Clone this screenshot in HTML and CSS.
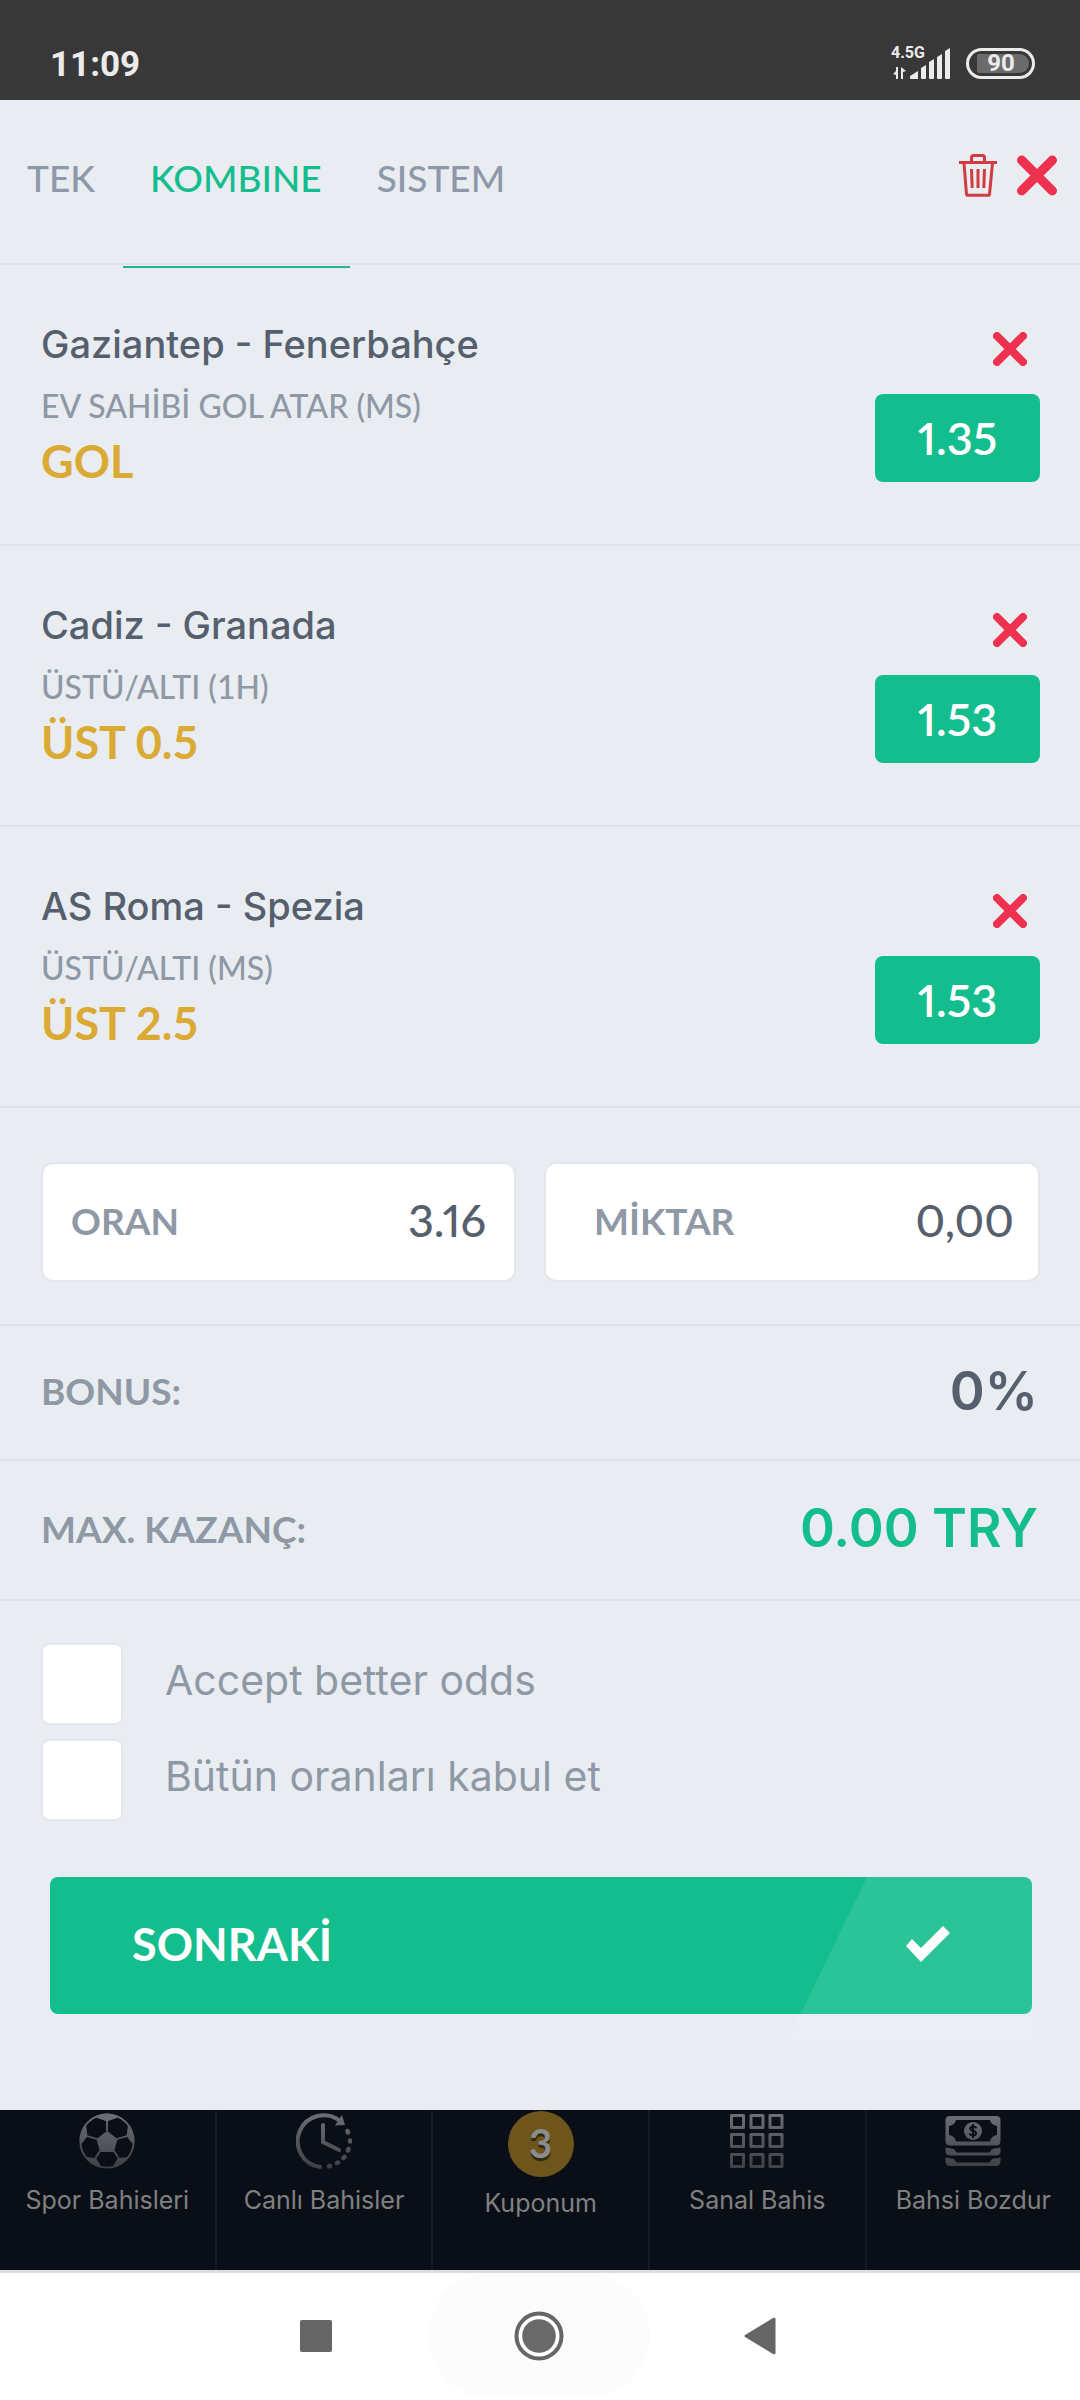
FILE: index.html
```html
<!DOCTYPE html>
<html lang="tr">
<head>
<meta charset="utf-8">
<meta name="viewport" content="width=device-width, initial-scale=1">
<title>Kuponum</title>
<link rel="stylesheet" href="styles.css">
</head>
<body>
<svg class="defs" aria-hidden="true">
  <defs>
    <linearGradient id="fade" gradientUnits="userSpaceOnUse" x1="0" y1="0" x2="0" y2="56">
      <stop offset="0" stop-color="#6e7075"/>
      <stop offset="1" stop-color="#3c3f46"/>
    </linearGradient>
    <symbol id="cross" viewBox="0 0 34 34">
      <path d="M4 4 30 30M30 4 4 30" fill="none" stroke="#ef3150" stroke-width="8" stroke-linecap="round"/>
    </symbol>
  </defs>
</svg>

<div class="status">
  <time class="clock">11:09</time>
  <div class="indicators">
    <div class="network">
      <span class="network-type">4.5G</span>
      <svg width="60" height="32" viewBox="0 0 60 32" fill="#ebebeb" aria-hidden="true">
        <path d="M7 19v12H5V27L2 26 5 23V19zM10 31V19l5 4-3 1v7z"/>
        <path d="M19 28l8-5v8h-7q-1 0-1-1zM30 20l5-3v13q0 1-1 1h-3q-1 0-1-1zM38 14l5-3v19q0 1-1 1h-3q-1 0-1-1zM46 9l5-3v24q0 1-1 1h-3q-1 0-1-1zM54 3l5-3v30q0 1-1 1h-3q-1 0-1-1z"/>
      </svg>
    </div>
    <div class="battery"><span class="battery-level">90</span></div>
  </div>
</div>

<main class="slip">
  <header class="slip-head">
    <nav class="tabs">
      <button class="tab" type="button">TEK</button>
      <button class="tab tab-active" type="button">KOMBINE</button>
      <button class="tab" type="button">SISTEM</button>
    </nav>
    <div class="actions">
      <button class="icon-button" type="button" aria-label="Kuponu temizle">
        <svg width="38" height="43" viewBox="0 0 38 43" fill="none" stroke="#d23c41" stroke-width="3" aria-hidden="true">
          <path d="M0 8.500H38M12.500 8V3.500Q12.500 1.500 14.500 1.500H23.500Q25.500 1.500 25.500 3.500V8M5 9 7.500 40.500Q7.600 41.200 8.500 41.200H29.500Q30.400 41.200 30.500 40.500L33.500 9M12.500 15l.7 19M19 15v19M25.500 15l-.7 19"/>
        </svg>
      </button>
      <button class="icon-button" type="button" aria-label="Kapat">
        <svg width="40" height="41" aria-hidden="true"><use href="#cross"/></svg>
      </button>
    </div>
  </header>

  <section class="bet">
    <div class="bet-info">
      <h2 class="bet-title">Gaziantep - Fenerbahçe</h2>
      <p class="bet-market">EV SAHİBİ GOL ATAR (MS)</p>
      <p class="bet-pick">GOL</p>
    </div>
    <div class="bet-side">
      <button class="icon-button bet-remove" type="button" aria-label="Sil"><svg width="34" height="34" aria-hidden="true"><use href="#cross"/></svg></button>
      <span class="odds">1.35</span>
    </div>
  </section>
  <section class="bet">
    <div class="bet-info">
      <h2 class="bet-title">Cadiz - Granada</h2>
      <p class="bet-market">ÜSTÜ/ALTI (1H)</p>
      <p class="bet-pick">ÜST 0.5</p>
    </div>
    <div class="bet-side">
      <button class="icon-button bet-remove" type="button" aria-label="Sil"><svg width="34" height="34" aria-hidden="true"><use href="#cross"/></svg></button>
      <span class="odds">1.53</span>
    </div>
  </section>
  <section class="bet">
    <div class="bet-info">
      <h2 class="bet-title">AS Roma - Spezia</h2>
      <p class="bet-market">ÜSTÜ/ALTI (MS)</p>
      <p class="bet-pick">ÜST 2.5</p>
    </div>
    <div class="bet-side">
      <button class="icon-button bet-remove" type="button" aria-label="Sil"><svg width="34" height="34" aria-hidden="true"><use href="#cross"/></svg></button>
      <span class="odds">1.53</span>
    </div>
  </section>

  <section class="stake">
    <div class="field">
      <span class="caption">ORAN</span>
      <span class="field-value">3.16</span>
    </div>
    <div class="field field-amount">
      <label class="caption" for="amount">MİKTAR</label>
      <input class="field-value amount" id="amount" type="text" inputmode="decimal" value="0,00">
    </div>
  </section>

  <div class="total">
    <span class="caption">BONUS:</span>
    <strong class="total-value">0%</strong>
  </div>
  <div class="total total-win">
    <span class="caption">MAX. KAZANÇ:</span>
    <strong class="total-value">0.00 TRY</strong>
  </div>

  <form class="confirm">
    <div class="option">
      <input class="tick" id="better" type="checkbox">
      <label for="better">Accept better odds</label>
    </div>
    <div class="option">
      <input class="tick" id="all" type="checkbox">
      <label for="all">Bütün oranları kabul et</label>
    </div>
    <button class="next" type="button">
      <span class="next-label">SONRAKİ</span>
      <span class="next-slant"></span>
      <svg class="next-check" width="44" height="36" viewBox="0 0 44 36" aria-hidden="true"><path d="M0 20 6 13 15 22 37 0 44 7 15 36z" fill="#fff"/></svg>
    </button>
  </form>
</main>

<nav class="menu">
  <a class="menu-item" href="#">
    <svg width="56" height="56" viewBox="0 0 56 56" aria-hidden="true">
      <circle cx="28" cy="28" r="26.700" fill="none" stroke="url(#fade)" stroke-width="1.800"/>
      <path fill="url(#fade)" d="M28 18 38.500 26 35 39H21L17.500 26zM15.500 4Q28-3 40.500 4L28 8.500zM1 25Q2 17 7 12L8.500 23 2.500 31zM55 25Q54 17 49 12L47.500 23 53.500 31zM6 44 17 45 22.500 54Q13 52 6 44zM50 44 39 45 33.500 54Q43 52 50 44z"/>
      <path fill="none" stroke="url(#fade)" stroke-width="1.800" d="M27.900 8 28.100 18M8 23 18 26M48 23 38 26M21 38 16.500 45M35 38 39.500 45"/>
    </svg>
    <span>Spor Bahisleri</span>
  </a>
  <a class="menu-item" href="#">
    <svg width="56" height="56" viewBox="0 0 56 56" fill="none" stroke="url(#fade)" stroke-width="4" stroke-linecap="round" aria-hidden="true">
      <path d="M24 54A26 26 0 1 1 44 8M27 12V29L43 37"/>
      <path d="M46 2 49 12 39 12.500z" fill="url(#fade)" stroke="none"/>
      <path d="M51.500 18l.5 1.500M54 27.500v1M52.500 36l-.5 1.500M48.500 44l-1 1M42 49.500l-1 .500M34 53l-1 .300" stroke-width="4.500"/>
    </svg>
    <span>Canlı Bahisler</span>
  </a>
  <a class="menu-item menu-slip" href="#">
    <span class="badge">3</span>
    <span>Kuponum</span>
  </a>
  <a class="menu-item" href="#">
    <svg width="56" height="56" viewBox="0 0 56 56" fill="none" stroke="url(#fade)" stroke-width="3" stroke-linejoin="round" aria-hidden="true">
      <path d="M2.500 2.500h12v12h-12zM22 2.500h12v12h-12zM41 2.500h12v12h-12zM2.500 21.500h12v12h-12zM22 21.500h12v12h-12zM41 21.500h12v12h-12zM2.500 41.500h12v12h-12zM22 41.500h12v12h-12zM41 41.500h12v12h-12z"/>
    </svg>
    <span>Sanal Bahis</span>
  </a>
  <a class="menu-item" href="#">
    <svg width="56" height="56" viewBox="0 0 56 56" fill="url(#fade)" aria-hidden="true">
      <path fill-rule="evenodd" d="M5 3H51Q55.500 3 55.500 7V28Q55.500 32.500 51 32.500H5Q.5 32.500.5 28V7Q.5 3 5 3zM11 7Q10 12 4 13V22Q10 23 11 28.500H45Q46 23 52 22V13Q46 12 45 7z"/>
      <path d="M.5 34.500 9 36 11.500 39.500H44.500L47 36 55.500 34.500V38Q55.500 42.500 51 42.500H5Q.5 42.500.5 38zM.5 44.500 9 46 11.500 49.500H44.500L47 46 55.500 44.500V48Q55.500 53 51 53H5Q.5 53 .5 48z"/>
      <circle cx="28" cy="18" r="9"/>
      <path d="M31.500 15Q30 13.300 27.800 13.500C24.500 14 24.500 17 27.800 17.800 32 18.800 32 22 28.400 22.300Q25.500 22.300 24.300 20.500M28 11v14" fill="none" stroke="#0a0f17" stroke-width="2"/>
    </svg>
    <span>Bahsi Bozdur</span>
  </a>
</nav>

<div class="system">
  <button class="icon-button" type="button" aria-label="Son uygulamalar"><svg width="32" height="32" viewBox="0 0 32 32" aria-hidden="true"><rect width="32" height="32" rx="2" fill="#666"/></svg></button>
  <button class="icon-button home" type="button" aria-label="Ana ekran"><svg width="50" height="50" viewBox="0 0 50 50" aria-hidden="true"><circle cx="25" cy="25" r="22.500" fill="#fff" stroke="#666" stroke-width="4"/><circle cx="25" cy="25" r="16.800" fill="#696969"/></svg></button>
  <button class="icon-button" type="button" aria-label="Geri"><svg width="32" height="38" viewBox="0 0 32 38" aria-hidden="true"><path d="M1 18 29 1Q31.500 0 31.500 2V36Q31.500 38 29 37L1 20Q0 19 1 18z" fill="#666"/></svg></button>
</div>
</body>
</html>
```
FILE: styles.css
```css
* {
  box-sizing: border-box;
}

body {
  margin: 0;
  background: #fff;
  color: #565f6d;
  font-family: Lato, "Open Sans", sans-serif;
  font-size: 37px;
  font-weight: 500;
}

h2,
p {
  margin: 0;
}

button,
input {
  font: inherit;
}

svg {
  display: block;
}

.defs {
  position: absolute;
  width: 0;
  height: 0;
}

.icon-button {
  padding: 0;
  border: 0;
  background: none;
}

/* Status bar */
.status {
  display: flex;
  justify-content: space-between;
  height: 100px;
  padding: 44px 45px 0 50px;
  background: #383838;
  color: #ebebeb;
  font-family: Roboto, sans-serif;
  font-weight: 700;
}

.clock {
  font-size: 35px;
  line-height: 42px;
}

.indicators {
  display: flex;
  gap: 15px;
}

.network {
  position: relative;
  padding-top: 2px;
}

.network svg {
  margin-top: 2px;
}

.network-type {
  position: absolute;
  top: 0;
  left: 0;
  font-size: 16px;
  line-height: 18px;
}

.battery {
  width: 69px;
  height: 31px;
  margin-top: 4px;
  padding: 3px;
  border: 3px solid #ebebeb;
  border-radius: 16px;
}

.battery-level {
  display: block;
  margin-left: 5px;
  padding-right: 4px;
  border-radius: 2px 10px 10px 2px;
  background: #6b6b6b;
  font-size: 24px;
  line-height: 19px;
  text-align: center;
}

/* Slip */
.slip {
  background: #e9edf2;
}

.slip-head {
  display: flex;
  justify-content: space-between;
  height: 165px;
  border-bottom: 2px solid #dfe3e8;
}

.tabs {
  display: flex;
}

.tab {
  height: 168px;
  padding: 0 28px 12px 27px;
  border: 0;
  border-bottom: 2px solid transparent;
  background: none;
  color: #8f98a8;
}

.tab-active {
  border-bottom-color: #25b58e;
  color: #14bd8d;
}

.actions {
  display: flex;
  align-items: center;
  gap: 20px;
  padding: 0 23px 13px 0;
}

.bet {
  display: flex;
  justify-content: space-between;
  padding: 55px 40px 56px 41px;
  border-bottom: 2px solid #dfe3e8;
}

.bet-title {
  font-family: Inter, sans-serif;
  font-size: 38px;
  font-weight: 500;
  line-height: 48px;
}

.bet-market {
  margin: 18px 0 8px;
  color: #8f98a5;
  font-size: 32px;
  line-height: 40px;
}

.bet-pick {
  color: #dbaa35;
  font-size: 45px;
  font-weight: 700;
  line-height: 54px;
}

.bet-side {
  display: flex;
  flex-direction: column;
  align-items: flex-end;
  gap: 28px;
  padding-top: 12px;
}

.bet-remove {
  margin-right: 13px;
}

.odds {
  width: 165px;
  border-radius: 8px;
  background: #14bd8d;
  color: #fff;
  font-size: 45px;
  font-variant-numeric: proportional-nums;
  font-weight: 600;
  line-height: 88px;
  text-align: center;
}

.stake {
  display: grid;
  grid-template-columns: 475fr 496fr;
  gap: 28px;
  padding: 54px 40px 42px 41px;
  border-bottom: 2px solid #dfe3e8;
}

.field {
  display: flex;
  align-items: center;
  justify-content: space-between;
  height: 120px;
  padding: 0 28px 4px;
  border: 2px solid #e3e7ec;
  border-radius: 12px;
  background: #fff;
}

.field-amount {
  padding: 0 24px 4px 48px;
}

.caption {
  color: #8f98a5;
  font-weight: 700;
}

.field-value {
  font-size: 45px;
  font-variant-numeric: proportional-nums;
}

.amount {
  width: 50%;
  padding: 0;
  border: 0;
  background: none;
  color: inherit;
  text-align: right;
}

.total {
  display: flex;
  align-items: center;
  justify-content: space-between;
  height: 135px;
  padding: 0 42px 4px 41px;
  border-bottom: 2px solid #dfe3e8;
}

.total-value {
  font-family: Inter, sans-serif;
  font-size: 53px;
  font-weight: 600;
}

.total-win {
  height: 140px;
}

.total-win .total-value {
  color: #14bd8d;
}

.confirm {
  display: flex;
  flex-direction: column;
  gap: 14px;
  padding: 42px 48px 96px 41px;
}

.option {
  display: flex;
  gap: 42px;
  color: #8f98a5;
  font-family: Inter, sans-serif;
  font-size: 41px;
  font-weight: 400;
  line-height: 74px;
}

.tick {
  width: 82px;
  height: 82px;
  margin: 0;
  appearance: none;
  border: 2px solid #e3e7ec;
  border-radius: 8px;
  background: #fff;
}

.next {
  position: relative;
  display: flex;
  align-items: center;
  justify-content: space-between;
  height: 137px;
  margin: 42px 0 0 9px;
  padding: 0 82px 4px;
  border: 0;
  border-radius: 8px;
  background: #14bd8d;
  color: #fff;
  font-size: 45px;
  font-weight: 700;
}

.next-slant {
  position: absolute;
  top: 0;
  right: 0;
  width: 245px;
  height: 165px;
  border-radius: 0 8px 8px 0;
  background: rgb(255 255 255 / 10%);
  clip-path: polygon(80px 0, 100% 0, 100% 100%, 0 100%);
}

.next-check {
  position: relative;
}

/* Bottom menu */
.menu {
  display: grid;
  grid-template-columns: repeat(4, 65fr) 64fr;
  height: 160px;
  background: #0a0f17;
}

.menu-item {
  display: flex;
  flex-direction: column;
  align-items: center;
  gap: 15px;
  padding-top: 3px;
  border-right: 2px solid #141a22;
  color: #808080;
  font-family: Inter, sans-serif;
  font-size: 25px;
  font-weight: 400;
  line-height: 32px;
  text-decoration: none;
}

.menu-item:last-child {
  border-right: 0;
}

.menu-slip {
  gap: 10px;
  padding-top: 1px;
}

.badge {
  width: 66px;
  height: 66px;
  border-radius: 50%;
  background: #6e551b;
  color: #8c8c8c;
  font-family: Lato, sans-serif;
  font-size: 40px;
  font-weight: 700;
  line-height: 64px;
  text-align: center;
  text-shadow: 0 3px 0 #33290f;
}

/* Device navigation */
.system {
  display: flex;
  align-items: center;
  justify-content: center;
  height: 130px;
  padding: 0 4px 2px 0;
  border-top: 3px solid #dcdddd;
}

.home {
  display: flex;
  align-items: center;
  justify-content: center;
  width: 222px;
  height: 125px;
  margin: 0 94px 0 96px;
  border-radius: 64px;
  background: #fcfcfc;
}
```
